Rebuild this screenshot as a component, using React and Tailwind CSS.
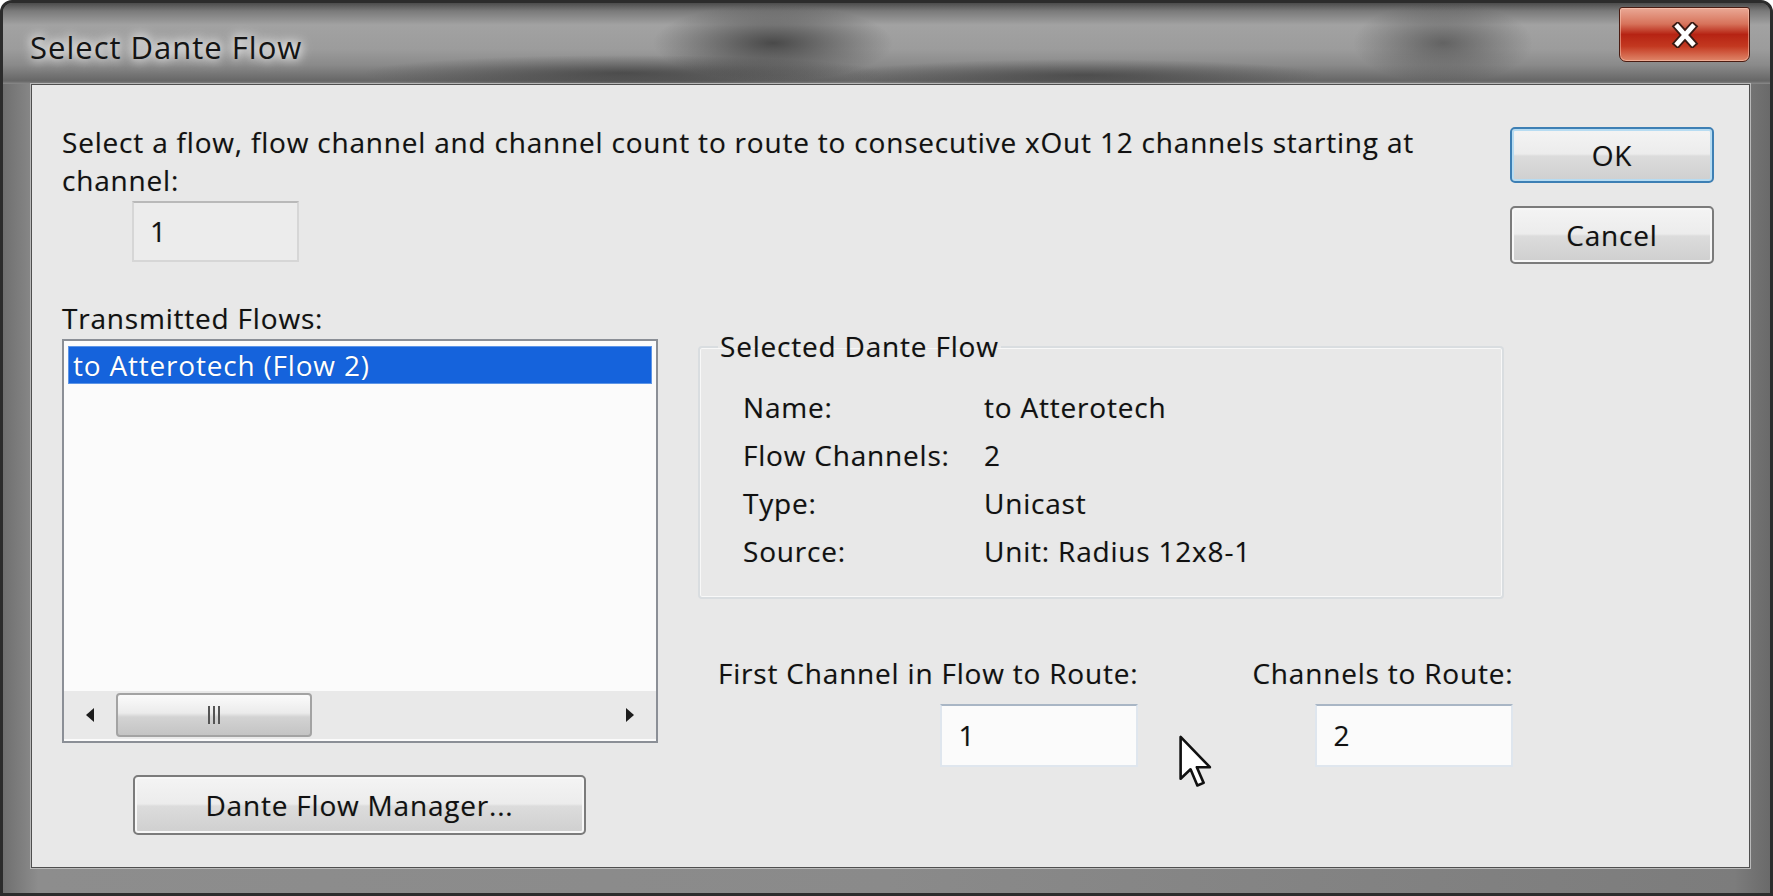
import React from "react";

function WinButton({ children, focused = false, className = "" }) {
  return (
    <div
      className={`flex items-center justify-center rounded-[5px] border-2 ${
        focused
          ? "border-[#3d7fb4] shadow-[inset_0_0_0_2px_#b7dcf2]"
          : "border-[#7b7b7b] shadow-[inset_0_0_0_2px_#f7f7f7]"
      } bg-[linear-gradient(to_bottom,#f4f4f4_0%,#ececec_48%,#dcdcdc_52%,#cfcfcf_100%)] text-[28px] leading-[33px] tracking-[0.8px] text-[#111] ${className}`}
    >
      {children}
    </div>
  );
}

function TextBox({ value, disabled = false, className = "" }) {
  return (
    <div
      className={`flex items-center px-[16px] text-[28px] leading-[33px] text-[#111] border-2 ${
        disabled
          ? "bg-[#ececec] border-[#d6d6d6] border-t-[#b9b9b9]"
          : "bg-[#fbfbfb] border-[#dfe6ee] border-t-[#a9b6c5]"
      } ${className}`}
    >
      {value}
    </div>
  );
}

function Arrow({ dir }) {
  return (
    <svg width="10" height="16" viewBox="0 0 10 16">
      {dir === "left" ? (
        <polygon points="9,1 1,8 9,15" fill="#1c1c1c" />
      ) : (
        <polygon points="1,1 9,8 1,15" fill="#1c1c1c" />
      )}
    </svg>
  );
}

function InfoRow({ label, value }) {
  return (
    <div className="flex h-[48px] items-center">
      <span className="w-[241px] shrink-0">{label}</span>
      <span>{value}</span>
    </div>
  );
}

export default function App() {
  return (
    <div className="flex h-[896px] w-[1773px] flex-col overflow-hidden rounded-t-[12px] border-[3px] border-[#2c2c2c] bg-[linear-gradient(to_right,#6f6f6f,#8d8d8d_2%,#8a8a8a_50%,#7c7c7c_98%,#6a6a6a)] [font-family:'Open_Sans',sans-serif]">
      {/* title bar */}
      <div className="flex h-[81px] shrink-0 items-start justify-between bg-[radial-gradient(ellipse_120px_38px_at_770px_40px,rgba(45,45,45,0.75),transparent),radial-gradient(ellipse_260px_18px_at_620px_70px,rgba(40,40,40,0.55),transparent),radial-gradient(ellipse_90px_40px_at_1440px_40px,rgba(50,50,50,0.55),transparent),radial-gradient(ellipse_240px_16px_at_1080px_72px,rgba(40,40,40,0.5),transparent),linear-gradient(to_bottom,#4c4c4c_0px,#7a7a7a_8px,#a2a2a2_22px,#9c9c9c_46px,#8a8a8a_62px,#666666_78px,#8a8a8a_81px)]">
        <div className="ml-[27px] mt-[24px] text-[31px] leading-[40px] tracking-[1px] text-[#141414] [text-shadow:0_0_10px_#fff,0_0_14px_#fff]">
          Select Dante Flow
        </div>
        <div className="mr-[20px] mt-[4px] flex h-[55px] w-[131px] items-center justify-center rounded-b-[7px] rounded-t-[3px] border border-[#4a1c12] bg-[linear-gradient(to_bottom,#eaa996_0%,#d7735b_30%,#b62313_50%,#c33820_72%,#e0876a_100%)] shadow-[inset_0_0_0_1px_rgba(255,210,190,0.5)]">
          <svg width="28" height="26" viewBox="0 0 30 28">
            <path d="M7 5 L23 23 M23 5 L7 23" stroke="#3a1a14" strokeWidth="9" strokeLinecap="square" />
            <path d="M7 5 L23 23 M23 5 L7 23" stroke="#ffffff" strokeWidth="5" strokeLinecap="square" />
          </svg>
        </div>
      </div>

      {/* client area */}
      <div className="relative mb-[25px] ml-[28px] mr-[20px] flex flex-1 border border-[#4f4f4f] bg-[#e8e8e8] pl-[30px] pr-[35px] pt-[42px] text-[28px] leading-[33px] tracking-[0.8px] text-[#111] shadow-[0_0_0_1px_#b9b9b9] [text-shadow:0_0_1px_rgba(0,0,0,0.25)]">
        <div className="flex flex-1 flex-col">
          <p className="-mt-[4px] whitespace-nowrap leading-[38px]">
            Select a flow, flow channel and channel count to route to consecutive xOut 12 channels starting at
            <br />
            channel:
          </p>
          <TextBox value="1" disabled className="ml-[70px] mt-[2px] h-[61px] w-[167px]" />

          <div className="mt-[40px] flex">
            {/* left panel */}
            <div className="flex w-[596px] flex-col">
              <div className="h-[33px]">Transmitted Flows:</div>
              <div className="mt-[4px] flex h-[404px] flex-col border-2 border-[#8b8f96] bg-[#fbfbfb]">
                <div className="mx-[4px] mt-[5px] flex h-[38px] items-center border border-[#5e95e6] bg-[#1563dc] pl-[4px] text-white">
                  to Atterotech (Flow 2)
                </div>
                <div className="flex-1" />
                <div className="mb-[2px] flex h-[48px] items-center bg-[#e9e9e9]">
                  <div className="flex w-[52px] justify-center">
                    <Arrow dir="left" />
                  </div>
                  <div className="flex h-[44px] w-[196px] items-center justify-center rounded-[4px] border-2 border-[#a3a3a3] bg-[linear-gradient(to_bottom,#fbfbfb_0%,#ebebeb_45%,#d3d3d3_55%,#c4c4c4_100%)]">
                    <div className="flex gap-[3px]">
                      <span className="h-[18px] w-[2px] bg-[#555]" />
                      <span className="h-[18px] w-[2px] bg-[#555]" />
                      <span className="h-[18px] w-[2px] bg-[#555]" />
                    </div>
                  </div>
                  <div className="flex-1" />
                  <div className="flex w-[52px] justify-center">
                    <Arrow dir="right" />
                  </div>
                </div>
              </div>
              <WinButton className="ml-[71px] mt-[32px] h-[60px] w-[453px]">Dante Flow Manager...</WinButton>
            </div>

            {/* right panel */}
            <div className="ml-[40px] flex w-[806px] flex-col">
              <fieldset className="mt-[28px] rounded-[4px] border-2 border-[#d9dde0] pb-[22px] shadow-[inset_0_0_0_1px_#f8f8f8]">
                <legend className="ml-[18px] px-[2px]">Selected Dante Flow</legend>
                <div className="pl-[43px] pt-[20px]">
                  <InfoRow label="Name:" value="to Atterotech" />
                  <InfoRow label="Flow Channels:" value="2" />
                  <InfoRow label="Type:" value="Unicast" />
                  <InfoRow label="Source:" value="Unit: Radius 12x8-1" />
                </div>
              </fieldset>

              <div className="mt-[58px] flex">
                <div className="ml-[20px] flex w-[421px] flex-col">
                  <div className="h-[33px] whitespace-nowrap">First Channel in Flow to Route:</div>
                  <TextBox value="1" className="mt-[14px] h-[63px] w-[198px] self-end" />
                </div>
                <div className="ml-[114px] flex w-[263px] flex-col">
                  <div className="h-[33px] whitespace-nowrap">Channels to Route:</div>
                  <TextBox value="2" className="mt-[14px] h-[63px] w-[198px] self-end" />
                </div>
              </div>
            </div>
          </div>
        </div>

        <div className="flex w-[204px] flex-col gap-[23px]">
          <WinButton focused className="h-[56px]">OK</WinButton>
          <WinButton className="h-[58px]">Cancel</WinButton>
        </div>

        {/* mouse pointer */}
        <svg
          className="absolute left-[1146px] top-[649px] blur-[0.6px]"
          width="34"
          height="58"
          viewBox="0 0 13 22"
        >
          <path
            d="M1 1 L1 17 L4.8 13.4 L7.4 19.6 L9.8 18.6 L7.2 12.6 L12.2 12.6 Z"
            fill="#ffffff"
            stroke="#111111"
            strokeWidth="1"
            strokeLinejoin="round"
          />
        </svg>
      </div>
    </div>
  );
}
